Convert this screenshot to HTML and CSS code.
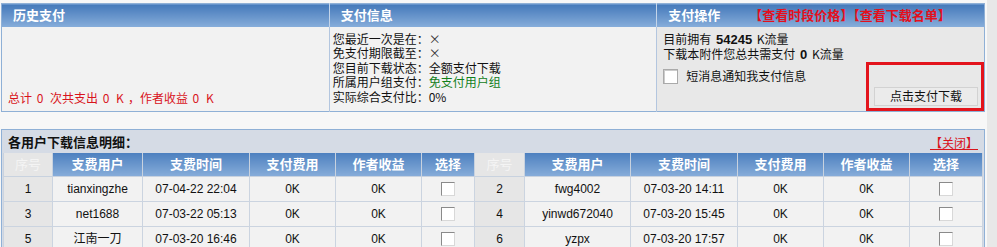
FILE: index.html
```html
<!DOCTYPE html>
<html lang="zh-CN">
<head>
  <meta charset="UTF-8" />
  <title>支付信息</title>
  <link rel="stylesheet" href="styles.css">
</head>
<body>
  <div class="page">
    <div class="main">
      <table class="pay">
        <tr class="head">
          <th class="c1">历史支付</th>
          <th class="c2">支付信息</th>
          <th class="c3">支付操作 <span class="links">【查看时段价格】【查看下载名单】</span></th>
        </tr>
        <tr class="body">
          <td class="c1 history">总计 <span class="num">0</span> 次共支出 <span class="num">0 K</span>，作者收益 <span class="num">0 K</span></td>
          <td class="c2 info">
            您最近一次是在：<span class="mark">×</span><br>
            免支付期限截至：<span class="mark">×</span><br>
            您目前下载状态：全额支付下载<br>
            所属用户组支付：<span class="green">免支付用户组</span><br>
            实际综合支付比：0%
          </td>
          <td class="c3 action">
            <div class="action-row">
              <div class="action-text">
                <div>目前拥有 <b>54245</b> K流量</div>
                <div>下载本附件您总共需支付 <b>0</b> K流量</div>
                <label class="notify"><span class="box big"></span>短消息通知我支付信息</label>
              </div>
              <div class="btn-frame">
                <button class="pay-btn">点击支付下载</button>
              </div>
            </div>
          </td>
        </tr>
      </table>

      <div class="detail">
        <div class="detail-title">
          <span>各用户下载信息明细：</span>
          <a class="close" href="#">【关闭】</a>
        </div>
        <table class="list">
          <colgroup>
            <col style="width:49px"><col style="width:90px"><col style="width:107px"><col style="width:86px"><col style="width:86px"><col style="width:53px">
            <col style="width:50px"><col style="width:106px"><col style="width:107px"><col style="width:86px"><col style="width:86px"><col style="width:73px">
          </colgroup>
          <tr>
            <th class="no">序号</th><th>支费用户</th><th>支费时间</th><th>支付费用</th><th>作者收益</th><th>选择</th>
            <th class="no">序号</th><th>支费用户</th><th>支费时间</th><th>支付费用</th><th>作者收益</th><th>选择</th>
          </tr>
          <tr>
            <td class="no">1</td><td>tianxingzhe</td><td>07-04-22 22:04</td><td>0K</td><td>0K</td><td><span class="box"></span></td>
            <td class="no">2</td><td>fwg4002</td><td>07-03-20 14:11</td><td>0K</td><td>0K</td><td><span class="box"></span></td>
          </tr>
          <tr>
            <td class="no">3</td><td>net1688</td><td>07-03-22 05:13</td><td>0K</td><td>0K</td><td><span class="box"></span></td>
            <td class="no">4</td><td>yinwd672040</td><td>07-03-20 15:45</td><td>0K</td><td>0K</td><td><span class="box"></span></td>
          </tr>
          <tr>
            <td class="no">5</td><td>江南一刀</td><td>07-03-20 16:46</td><td>0K</td><td>0K</td><td><span class="box"></span></td>
            <td class="no">6</td><td>yzpx</td><td>07-03-20 17:57</td><td>0K</td><td>0K</td><td><span class="box"></span></td>
          </tr>
        </table>
      </div>
    </div>
    <div class="strip"></div>
  </div>
</body>
</html>
```

FILE: styles.css
```css
body {
  margin: 0;
  background: #f7f7f7;
  font-family: "Liberation Sans", "Noto Sans CJK SC", sans-serif;
  font-size: 12px;
  color: #111;
  overflow: hidden;
}
.page {
  display: flex;
  height: 247px;
}
.main {
  width: 985px;
  padding: 3px 0 0 1px;
  box-sizing: border-box;
}
.strip {
  flex: 1;
  background: #e8e8e8;
  border-left: 2px solid #f7f7f7;
}
.pay {
  width: 984px;
  border-collapse: collapse;
  border: 1px solid #8fb0d6;
  table-layout: fixed;
}
.pay tr.head { height: 23px; }
.pay tr.body { height: 85px; }
.pay th {
  padding: 0 0 0 11px;
  text-align: left;
  color: #fff;
  font-size: 13px;
  font-weight: bold;
  line-height: 16px;
  background: linear-gradient(#4479ba, #88aedb);
  border-left: 1px solid #c4d5ea;
  font-family: "Noto Sans CJK SC", sans-serif;
}
.pay th.c1 { border-left: none; }
.pay th .links {
  color: #e4101c;
  margin-left: 26px;
}
.pay td {
  background: #f2f2f2;
  border-left: 1px solid #b3c6df;
  font-family: "Noto Sans CJK SC", sans-serif;
}
.pay td.c1 { border-left: none; }
.pay td.c3 { background: #e8e8e8; }
.history {
  vertical-align: bottom;
  padding: 0 0 5px 6px;
  color: #d9141c;
  line-height: 16px;
}
.history .num {
  margin: 0 2px;
  letter-spacing: 2px;
}
.info {
  vertical-align: top;
  padding: 5px 0 0 3px;
  line-height: 14.6px;
}
.mark { color: #333; }
.green { color: #11801a; }
.action {
  vertical-align: top;
  padding: 5px 0 0 6px;
}
.action-row {
  display: flex;
  justify-content: space-between;
  line-height: 14.6px;
}
.action-text b {
  font-family: "Liberation Sans", sans-serif;
  font-size: 13px;
  margin: 0 2px;
}
.notify {
  display: flex;
  align-items: center;
  gap: 8px;
  margin-top: 6px;
}
.btn-frame {
  margin-top: 30px;
  width: 109px;
  height: 41px;
  border: 3px solid #e3141c;
  display: flex;
  align-items: flex-end;
  justify-content: flex-end;
  padding: 0 3px 2px 0;
}
.pay-btn {
  width: 104px;
  height: 19px;
  padding: 0;
  background: #ebebeb;
  border: 1px solid #d2d2d2;
  font-family: "Noto Sans CJK SC", sans-serif;
  font-size: 12px;
  line-height: 16px;
  color: #111;
}
.box {
  display: inline-block;
  width: 12px;
  height: 12px;
  background: #fff;
  border: 1px solid #8a8a8a;
  border-right-color: #d8d8d8;
  border-bottom-color: #d8d8d8;
  vertical-align: middle;
}
.box.big {
  width: 13px;
  height: 13px;
  border: 1px solid #aaa;
  box-shadow: inset 1px 1px 0 #ccc;
}
.detail {
  margin-top: 17px;
  width: 984px;
  border: 1px solid #8fb0d6;
  box-sizing: border-box;
  background: #d5dbe5;
}
.detail-title {
  height: 23px;
  display: flex;
  align-items: center;
  justify-content: space-between;
  padding: 0 6px;
  font-family: "Noto Sans CJK SC", sans-serif;
  font-size: 13px;
  font-weight: bold;
  line-height: 16px;
}
.close {
  color: #d9141c;
  font-weight: normal;
  font-size: 12px;
  text-decoration: underline;
  padding-top: 2px;
}
.list {
  margin-left: 1px;
  border-collapse: collapse;
  table-layout: fixed;
  width: 979px;
}
.list tr { height: 25px; }
.list tr:first-child { height: 23px; }
.list th {
  padding: 0;
  color: #fff;
  font-size: 13px;
  font-weight: bold;
  line-height: 16px;
  background: linear-gradient(#4d80bf, #86acd9);
  border: 1px solid #c8d2df;
  border-top: none;
  font-family: "Noto Sans CJK SC", sans-serif;
}
.list th.no {
  background: #e6e6e6;
  color: #f4f4f4;
  font-weight: normal;
}
.list td {
  padding: 0;
  line-height: 16px;
  text-align: center;
  background: #f2f2f2;
  border: 1px solid #cbd4e0;
  color: #111;
}
.list td.no {
  background: #e6e6e6;
}
```
